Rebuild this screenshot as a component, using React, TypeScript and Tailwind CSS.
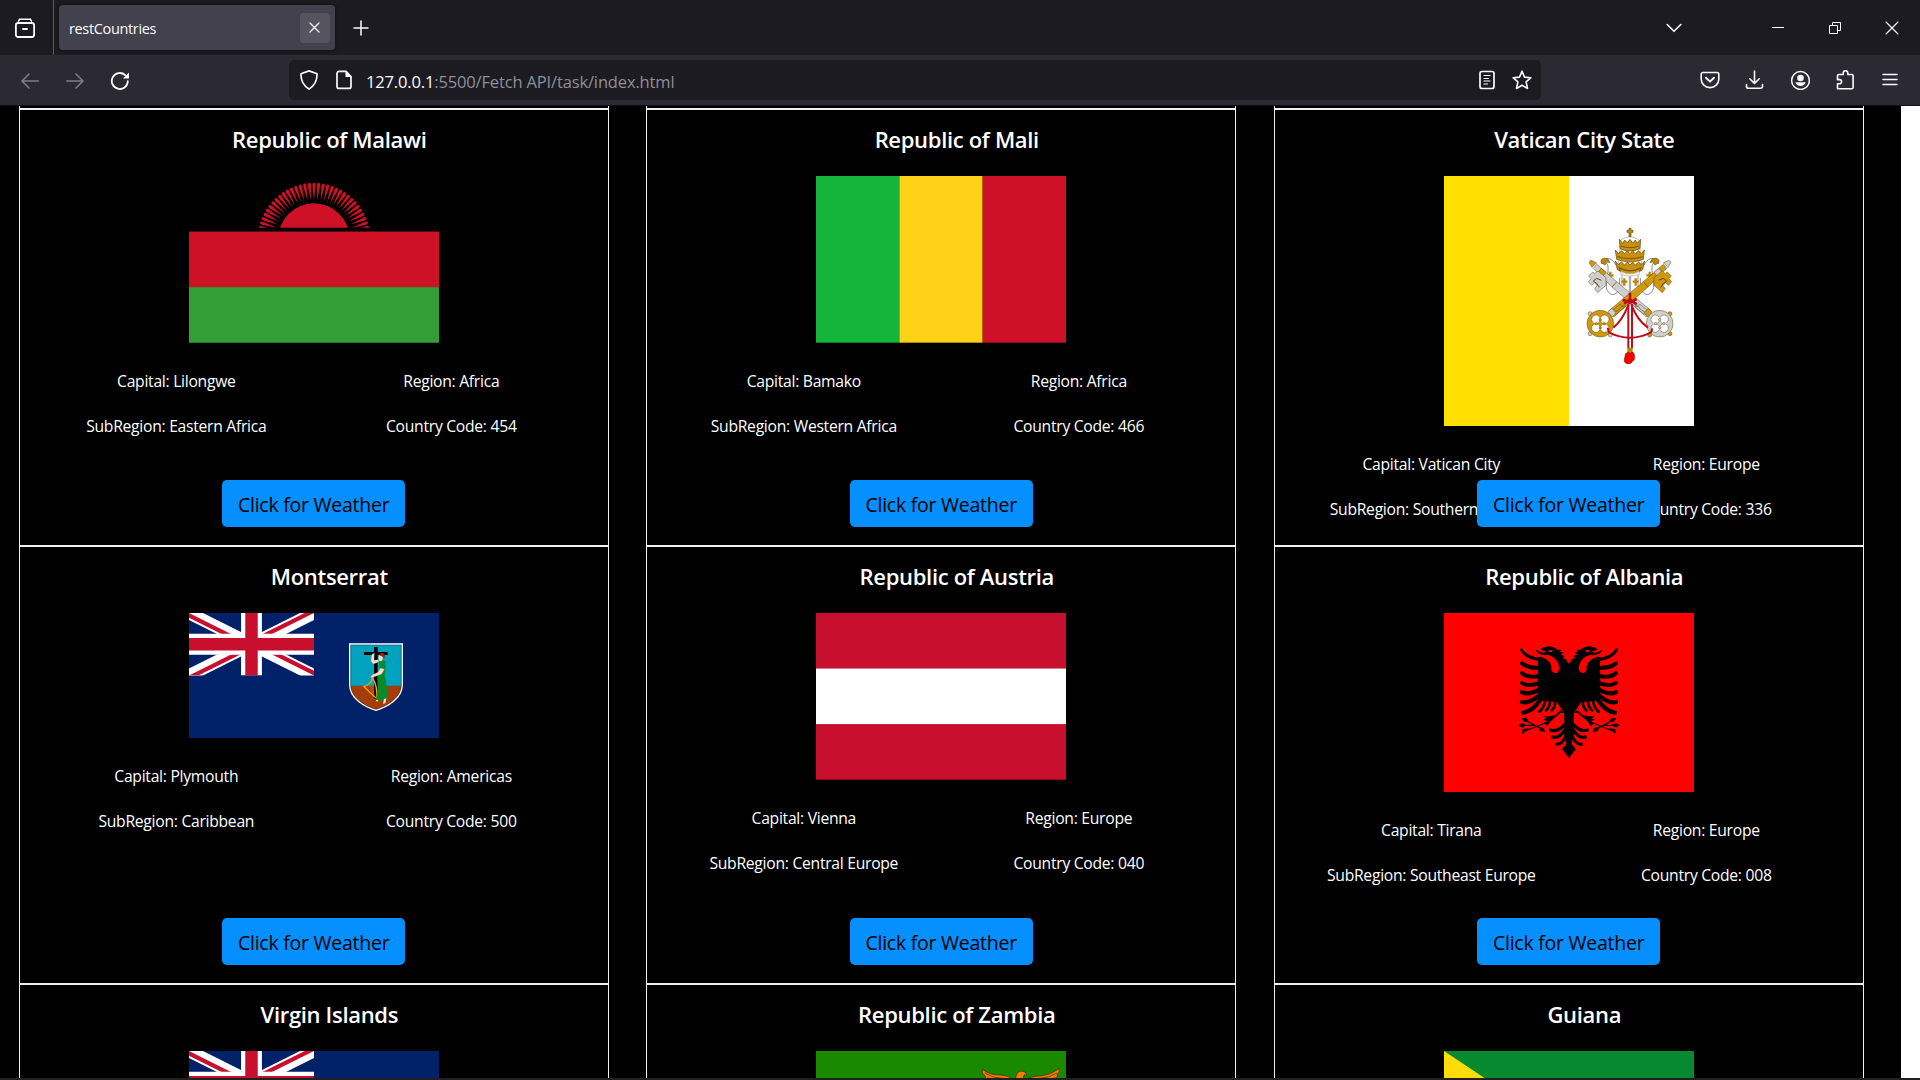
import React from "react";

const Icon = ({ w = 20, h = 20, className = "", children }: { w?: number; h?: number; className?: string; children: React.ReactNode }) => (
  <svg
    width={w}
    height={h}
    viewBox={`0 0 ${w} ${h}`}
    fill="none"
    stroke="#fbfbfe"
    strokeWidth={1.6}
    strokeLinecap="round"
    strokeLinejoin="round"
    className={`block shrink-0 ${className}`}
  >
    {children}
  </svg>
);

function TabBar() {
  return (
    <div className="flex h-[55px] items-center bg-[#1c1b22]">
      <div className="flex h-full w-[54px] items-center border-r border-[#5a5960] pl-[15px]">
        <Icon>
          <path d="M4.5 1.2h11M3.5 3.2l1-1.8M16.500 3.200l-1-1.800" strokeWidth={1.5} />
          <rect x="0.900" y="5" width="18.200" height="14" rx="2.200" strokeWidth={1.8} />
          <path d="M8 11h4" strokeWidth={1.800} />
        </Icon>
      </div>
      <div className="ml-[5px] flex h-[45px] w-[276px] items-center justify-between rounded-[4px] bg-[#42414d] pr-[5px] pl-[10px] shadow-[0_0_4px_rgba(0,0,0,0.5)]">
        <span className="pt-[2px] text-[14.500px] tracking-[-0.350px] text-[#fbfbfe]">restCountries</span>
        <span className="flex h-[30px] w-[30px] items-center justify-center rounded-[4px] bg-[#55545f]">
          <Icon w={11} h={11} className="mr-[1px]">
            <path d="M1 1l9 9M10 1l-9 9" strokeWidth={1.300} />
          </Icon>
        </span>
      </div>
      <Icon w={16} h={16} className="ml-[18px]">
        <path d="M8 1v14M1 8h14" strokeWidth={1.500} />
      </Icon>
      <div className="ml-auto flex items-center pr-[21.500px]">
        <Icon w={16} h={10} className="mr-[90px]">
          <path d="M1.200 1.500l6.800 6.800 6.800-6.800" />
        </Icon>
        <Icon w={12} h={12} className="mr-[45px]">
          <path d="M0 5.500h12" strokeWidth={1} strokeLinecap="butt" />
        </Icon>
        <Icon w={12} h={12} className="mr-[44px]">
          <path d="M.5 3.500h8v8h-8zM3.500 3.500v-3h8v8h-3" strokeWidth={1} strokeLinejoin="miter" strokeLinecap="butt" />
        </Icon>
        <Icon w={14} h={14}>
          <path d="M1 1l12 12M13 1L1 13" strokeWidth={1.100} />
        </Icon>
      </div>
    </div>
  );
}

function ToolBar() {
  return (
    <div className="flex h-[51px] items-center border-b border-[#0f0e14] bg-[#2b2a33]">
      <Icon w={18} h={16} className="mt-[1px] ml-[21px] opacity-40">
        <path d="M17.300 8H1M8 1L1 8l7 7" strokeWidth={1.500} />
      </Icon>
      <Icon w={18} h={16} className="mt-[1px] ml-[27px] opacity-40">
        <path d="M.7 8H17M10 1l7 7-7 7" strokeWidth={1.500} />
      </Icon>
      <Icon className="mt-[1px] ml-[26px]">
        <path d="M17.800 10.200a8 8 0 1 1-2.600-6.100" strokeWidth={1.800} />
        <path d="M19 1.500V7.500h-6z" fill="#fbfbfe" stroke="none" />
      </Icon>
      <div className="ml-[159px] flex h-10 w-[1252px] items-center rounded-[5px] bg-[#1c1b22]">
        <Icon className="ml-[10px]">
          <path d="M10 .9L18 3.800c.3 6.500-2 11.600-8 15.300C4 15.400 1.700 10.300 2 3.800z" strokeWidth={1.700} />
        </Icon>
        <Icon w={16} className="ml-[17px]">
          <path d="M10 1.400H3A2 2 0 0 0 1 3.400v13a2 2 0 0 0 2 2h10a2 2 0 0 0 2-2V6.500z" strokeWidth={1.700} />
          <path d="M9.500 1v6h6z" fill="#fbfbfe" stroke="none" />
        </Icon>
        <span className="ml-[14px] pt-[4px] text-[16.500px] tracking-[-0.150px] text-[#8f8f98]">
          <span className="text-[#fbfbfe]">127.0.0.1</span>:5500/Fetch API/task/index.html
        </span>
        <Icon w={16} className="ml-auto">
          <rect x="1" y="1.500" width="14" height="17" rx="2" strokeWidth={1.700} />
          <path d="M5 5.500h6M5 8.500h4.500M5 11h6M5 14h3.500" strokeWidth={1.200} />
        </Icon>
        <Icon className="mr-[9px] ml-[17px]">
          <path d="M10 1.200l2.500 5.900 6.400.6-4.800 4.200 1.400 6.600L10 15.200l-5.500 3.300 1.400-6.600L1.100 7.700l6.400-.6z" />
        </Icon>
      </div>
      <div className="ml-auto flex items-center pr-[22px]">
        <Icon>
          <path d="M3 2.500h14a1.800 1.800 0 0 1 1.800 1.800v5a8.800 8.300 0 0 1-17.600 0v-5A1.800 1.800 0 0 1 3 2.500z" />
          <path d="M6 7.800l4 3.800 4-3.800" strokeWidth={2} />
        </Icon>
        <Icon className="ml-[24px]">
          <path d="M10.500 1v12.300M5.800 8.800l4.700 4.700 4.700-4.700M2.500 14.500v2a1.800 1.800 0 0 0 1.800 1.800h12.400a1.800 1.800 0 0 0 1.800-1.800v-2" />
        </Icon>
        <Icon className="ml-[26px]">
          <circle cx="10.500" cy="10.500" r="8.900" strokeWidth={1.500} />
          <circle cx="10.500" cy="8" r="3.300" fill="#fbfbfe" stroke="none" />
          <path d="M5.300 12.300h10.400c-.6 2.400-2.600 3.700-5.200 3.700s-4.600-1.300-5.200-3.700z" fill="#fbfbfe" stroke="none" />
        </Icon>
        <Icon className="ml-[25px]">
          <path d="M2.500 18.800V13.800h2a2.100 2.100 0 0 0 0-4.200h-2V5.800a1.300 1.300 0 0 1 1.300-1.300h4.400V3a2.300 2.300 0 0 1 4.600 0v1.500h4a1.300 1.300 0 0 1 1.300 1.300v11.700a1.300 1.300 0 0 1-1.300 1.300z" />
        </Icon>
        <Icon w={16} className="ml-[27px]">
          <path d="M1 4.500h14M1 9.500h14M1 14.500h14" strokeWidth={1.500} />
        </Icon>
      </div>
    </div>
  );
}

const Svg = ({ h, children }: { h: number; children: React.ReactNode }) => (
  <svg width={250} height={h / 3} viewBox={`0 0 750 ${h}`} preserveAspectRatio="none" className="block shrink-0">
    {children}
  </svg>
);

const rays = Array.from({ length: 33 }, (_, i) => (i - 16) * 4.87);

const Malawi = () => (
  <Svg h={500}>
    <defs>
      <clipPath id="sunClip">
        <rect x="0" y="0" width="750" height="155" />
      </clipPath>
    </defs>
    <rect width="750" height="500" fill="#000" />
    <rect y="166.700" width="750" height="167" fill="#ce1126" />
    <rect y="333.300" width="750" height="167" fill="#339e35" />
    <g clipPath="url(#sunClip)" fill="#ce1126">
      <circle cx="375" cy="189" r="107" />
      {rays.map((a) => (
        <path key={a} transform={`rotate(${a} 375 189)`} d="M375 72 L370 27 Q370 20 375 20 Q380 20 380 27 Z" />
      ))}
    </g>
  </Svg>
);

const Mali = () => (
  <Svg h={500}>
    <rect width="250" height="500" fill="#14b53a" />
    <rect x="250" width="250" height="500" fill="#fcd116" />
    <rect x="500" width="250" height="500" fill="#ce1126" />
  </Svg>
);

/* One key, drawn with its bow at lower left and its bit at upper right. */
const Key = ({ main, accent }: { main: string; accent: string }) => (
  <g stroke="#5c4a1a" strokeWidth={1.500}>
    <path d="M537 437L640 350l14 16L551 456z" fill={main} />
    <path d="M640 350l60-52 10 12-56 56z" fill={main} />
    <path d="M672 322l14-12 12 14-14 12z" fill={accent} />
    <path d="M708 300l-8-6 12-6a6 6 0 1 1 8 9l-6 10z" fill={accent} />
    <path d="M672 338l24-20 10 8 6-5 12 12-7 8 8 9-10 11-9-8-7 9 7 9-9 12-25-22z" fill={main} />
    <path d="M686 346l14-6 10 8-10 7-8 12" fill="none" strokeWidth={3} />
    <path d="M548 436l22-18 14 8-26 22z" fill={main} />
    <path d="M556 440q10-2 14-10t16-8" fill="none" strokeWidth={2} />
    <circle cx="480" cy="446" r="6" fill={accent} />
    <circle cx="480" cy="506" r="6" fill={accent} />
    <circle cx="541" cy="510" r="6" fill={accent} />
    <path d="M534 440l12-10 12 14-12 12z" fill={accent} />
    <circle cx="511" cy="476" r="40" fill={main} />
    <g fill="#fff">
      <circle cx="498" cy="463" r="13" />
      <circle cx="524" cy="463" r="13" />
      <circle cx="498" cy="489" r="13" />
      <circle cx="524" cy="489" r="13" />
    </g>
    <path d="M511 446v60M481 476h60" stroke={main} strokeWidth={4} />
    <g fill={main}>
      <circle cx="511" cy="464" r="3.500" />
      <circle cx="511" cy="488" r="3.500" />
      <circle cx="499" cy="476" r="3.500" />
      <circle cx="523" cy="476" r="3.500" />
    </g>
  </g>
);

const Lappet = () => (
  <g>
    <path
      d="M558 300q-14-24-30-19-16 5-14 14 18-8 20 10c3 22-8 40-5 62 2 14 14 26 26 20 12-5 14-22 14-48"
      fill="#fff"
      stroke="#8a8a8a"
      strokeWidth={3}
    />
    <path d="M576 322v60q8 8 22 4v-58z" fill="#fff" stroke="#8a8a8a" strokeWidth={2.500} />
    <path d="M513 293q-2-12 10-14l12 4 5 10-9-2-6 9z" fill="#b8860b" stroke="#5c4a1a" strokeWidth={1.500} />
    <path d="M541 320v24M531 331h20M583 340v22M574 350h18M552 348v18" stroke="#b8860b" strokeWidth={7} />
  </g>
);

const Vatican = () => (
  <Svg h={750}>
    <rect width="375" height="750" fill="#ffe000" />
    <rect x="375" width="375" height="750" fill="#fff" />
    <g transform="translate(-42 -33)">
      <Lappet />
      <g transform="matrix(-1 0 0 1 1200 0)">
        <Lappet />
      </g>
      <g transform="matrix(-1 0 0 1 1200 0)">
        <Key main="#cfcfcf" accent="#d0980c" />
      </g>
      <Key main="#d0980c" accent="#cfcfcf" />
      <path d="M573 225q27-20 54 0l9 85q-36 34-72 0z" fill="#fff" stroke="#999" strokeWidth={2} />
      <g fill="#c8900c" stroke="#5c4208" strokeWidth={2}>
        <path d="M597 190h6v6h6v6h-6v13h-6v-13h-6v-6h6z" />
        <path d="M568 223l10 12 6-10 8 9 8-11 8 11 8-9 6 10 10-12-2 28q-30 14-60 0z" />
        <path d="M556 255l10 11 8-9 10 9 8-9 8 9 8-9 8 9 10-9 8 9 9-11-3 28q-40 16-80 0z" />
        <path d="M556 288l9 11 9-8 10 9 8-9 8 9 8-9 8 9 10-9 9 8 9-11-6 26q-36 24-76 0z" />
        <path d="M568 308q32 20 64 0l-3 13q-29 20-58 0z" />
      </g>
      <path d="M572 243q28 10 56 0M562 275q38 12 76 0M566 309q34 16 68 0" stroke="#7a5706" strokeWidth={3} fill="none" />
      <path d="M572 319q28 15 56 0v9q-28 11-56 0z" fill="#eee" stroke="#aaa" strokeWidth={1.500} />
      <g fill="none" stroke="#b9101c" strokeWidth={6}>
        <path d="M600 384v34M578 404l22 8 20-10M582 416l18-12 20 14" strokeWidth={8} />
        <path d="M596 418q-20 50-46 70M604 418q16 46 50 70" />
        <path d="M533 488l4 14q63 32 126 0l4-12" strokeWidth={6} />
        <path d="M595 416v134M606 416v134" />
      </g>
      <path d="M592 548h16v18h-16z" fill="#b8860b" />
      <path d="M587 566q8-7 14 0l3-4q8-2 9 8 2 18-6 19-2 8-13 7-12-1-11-12z" fill="#f00" stroke="#900" strokeWidth={2} />
    </g>
  </Svg>
);

const UnionJack = ({ id }: { id: string }) => (
  <g transform="scale(6.25)">
    <defs>
      <clipPath id={`${id}a`}>
        <path d="M0 0h60v30H0z" />
      </clipPath>
      <clipPath id={`${id}b`}>
        <path d="M30 15h30v15zv15H0zH0V0zV0h30z" />
      </clipPath>
    </defs>
    <g clipPath={`url(#${id}a)`}>
      <path d="M0 0l60 30M60 0L0 30" stroke="#fff" strokeWidth={6} />
      <path d="M0 0l60 30M60 0L0 30" clipPath={`url(#${id}b)`} stroke="#c8102e" strokeWidth={4} />
      <path d="M30 0v30M0 15h60" stroke="#fff" strokeWidth={10} />
      <path d="M30 0v30M0 15h60" stroke="#c8102e" strokeWidth={6} />
    </g>
  </g>
);

const Montserrat = () => (
  <Svg h={375}>
    <rect width="750" height="375" fill="#012169" />
    <UnionJack id="ms" />
    <g transform="translate(-27 -39)">
      <path d="M510 132h156v122c0 42-44 66-78 76-34-10-78-34-78-76z" fill="#00a2bd" />
      <path d="M510 257h156c-2 42-46 63-78 73-32-10-76-31-78-73z" fill="#a53d08" />
      <path d="M552 156h71v9h-30v132h-11V165h-30zM582 141h11v20h-11z" fill="#000" />
      <path d="M577 234q16 22 13 62l-38-36q22-8 25-26z" fill="none" stroke="#f0a010" strokeWidth={4} />
      <path d="M565 245l14 36M572 242l12 46" stroke="#f0a010" strokeWidth={1} />
      <path d="M596 184L608 180 616 184 617 206 614 224 621 262 623 292 608 304 588 300 594 262 592 228 600 206Z" fill="#078a2c" />
      <path d="M596 186l-16 6-7-8 2-20 8-5-1 22 14-2zM602 204l-8 13-18 8-5 8 8-1 26-10 8-14z" fill="#ffe0c8" stroke="#a88" strokeWidth={1} />
      <ellipse cx="602" cy="173" rx="6" ry="10" fill="#ffe0c8" />
      <path d="M598 166q2-8 10-7 10 3 5 16l-5-5z" fill="#a8200d" />
      <path d="M612 297l7-2-3 15-7 1zM587 300h8l-4 6z" fill="#ffe0c8" />
      <path d="M509 132h158v122c0 42-46 67-79 77-33-10-79-35-79-77z" fill="none" stroke="#fff" strokeWidth={4} />
      <path d="M512.500 135.500h151v118c0 40-44 64-75.500 74-31.500-10-75.500-34-75.500-74z" fill="none" stroke="#333" strokeWidth={1.200} />
    </g>
  </Svg>
);

const Austria = () => (
  <Svg h={500}>
    <rect width="750" height="500" fill="#c8102e" />
    <rect y="166.700" width="750" height="166.600" fill="#fff" />
  </Svg>
);

const EagleHalf = () => (
  <g>
    <path
      d="M388 193L382 185 378 177 368 175 373 168 363 164 370 157 360 156 365 149 352 149Q342 140 325 139L308 143 301 149 312 152 320 156 308 158Q298 156 290 149L288 152Q294 162 308 164L318 166 294 172 293 290 310 303 350 306 372 338 373 362 372 400 379 432 366 448 388 475Z"
      fill="#000"
    />
    <path d="M325 151l13-1-3 6-8 1z" fill="#f00" />
    <path d="M300 170Q316 172 330 188 336 197 334 208 336 219 346 219 357 217 358 205 356 180 335 169L322 164Z" fill="#f00" />
    <path d="M300 183q-41-2-59-31-2-8 5-8 12 24 54 30z" fill="#000" />
    <g fill="none" stroke="#000" strokeWidth={12} strokeLinecap="round">
      <path d="M300 203q-34 3-54-13" />
      <path d="M300 228q-38 7-54-9" />
      <path d="M300 248q-36 14-54 1" />
      <path d="M300 267q-32 20-54 10" strokeWidth={13} />
      <path d="M300 284q-30 28-54 22" strokeWidth={13} />
      <path d="M302 298q-26 38-53 40" strokeWidth={13} />
      <path d="M315 303q-4 22-17 32" strokeWidth={8} />
      <path d="M330 304q0 16-12 28" strokeWidth={8} />
      <path d="M345 306q2 14-10 25" strokeWidth={8} />
      <path d="M374 374q-22 24-42 16" strokeWidth={10} />
      <path d="M376 388q-20 30-38 23" strokeWidth={10} />
      <path d="M380 402q-12 32-30 31" strokeWidth={9} />
    </g>
    <path d="M372 338Q350 344 330 366L322 378 312 369 322 365 310 358 320 356 309 349Q325 350 345 346L362 330Z" fill="#000" />
    <ellipse cx="358" cy="358" rx="11" ry="22" transform="rotate(30 358 358)" fill="#f00" />
    <path d="M325 365L248 396M250 358l62 33M236 376h50" stroke="#000" strokeWidth={3.500} />
    <path d="M245 355l14-2 8 12-14 0zM235 376l12-7 10 7-10 7zM246 403l2-16 18-2-10 10zM316 395l-6-12-16-3 8 14z" fill="#000" />
  </g>
);

const Albania = () => (
  <Svg h={537}>
    <rect width="750" height="537" fill="#f00" />
    <g transform="translate(-12 -39)">
      <EagleHalf />
      <g transform="matrix(-1 0 0 1 774 0)">
        <EagleHalf />
      </g>
    </g>
  </Svg>
);

const VirginIslands = () => (
  <Svg h={375}>
    <rect width="750" height="375" fill="#012169" />
    <UnionJack id="vi" />
  </Svg>
);

const Zambia = () => (
  <Svg h={500}>
    <rect width="750" height="500" fill="#198a00" />
    <path
      d="M498 54q22 18 52 18 24 0 40 12l8 8q0-24 12-31 12-3 20 4l2 9-7-3q-5 8-2 20 20-16 48-16 34-3 58-23 4 12-6 20 6 4-6 10 2 6-10 8l-14 10-20 10H550l-24-12-10-10q-10-6-8-12-12-8-10-22z"
      fill="#ef7d00"
      stroke="#3a1c00"
      strokeWidth={2}
    />
    <path d="M506 66q26 16 54 16l30 12M514 80q22 12 40 12l20 6M724 66q-26 16-54 16l-30 12M716 80q-22 12-40 12l-20 6" fill="none" stroke="#6b3600" strokeWidth={2.500} />
  </Svg>
);

const Guiana = () => (
  <Svg h={500}>
    <rect width="750" height="500" fill="#078930" />
    <path d="M0 0l750 500H0z" fill="#fcdd09" />
  </Svg>
);

type Country = { name: string; flag: React.ReactNode; capital?: string; region?: string; sub?: string; code?: string };

const rows: Country[][] = [
  [
    { name: "Republic of Malawi", flag: <Malawi />, capital: "Lilongwe", region: "Africa", sub: "Eastern Africa", code: "454" },
    { name: "Republic of Mali", flag: <Mali />, capital: "Bamako", region: "Africa", sub: "Western Africa", code: "466" },
    { name: "Vatican City State", flag: <Vatican />, capital: "Vatican City", region: "Europe", sub: "Southern Europe", code: "336" },
  ],
  [
    { name: "Montserrat", flag: <Montserrat />, capital: "Plymouth", region: "Americas", sub: "Caribbean", code: "500" },
    { name: "Republic of Austria", flag: <Austria />, capital: "Vienna", region: "Europe", sub: "Central Europe", code: "040" },
    { name: "Republic of Albania", flag: <Albania />, capital: "Tirana", region: "Europe", sub: "Southeast Europe", code: "008" },
  ],
  [
    { name: "Virgin Islands", flag: <VirginIslands /> },
    { name: "Republic of Zambia", flag: <Zambia /> },
    { name: "Guiana", flag: <Guiana /> },
  ],
];

function Card({ c }: { c: Country }) {
  return (
    <div className="relative flex h-full w-[590px] shrink-0 flex-col items-center border border-[#f0f0f0]">
      <h2 className="mt-[14px] h-[30px] pl-[31px] text-[22px] leading-[30px] font-semibold tracking-[-0.320px] whitespace-nowrap text-white">{c.name}</h2>
      <div className="mt-[22px]">{c.flag}</div>
      {c.capital && (
        <>
          <div className="mt-[16.200px] grid w-[550px] grid-cols-2 text-center text-[15.700px] leading-[44.700px] font-[370] tracking-[-0.280px] whitespace-nowrap text-white">
            <span>Capital: {c.capital}</span>
            <span>Region: {c.region}</span>
            <span>SubRegion: {c.sub}</span>
            <span>Country Code: {c.code}</span>
          </div>
          <button className="absolute bottom-[18px] left-[202.400px] h-[47px] w-[183px] rounded-[5px] bg-[#058fff] pt-[2px] text-[19.500px] tracking-[-0.250px] whitespace-nowrap text-black">
            Click for Weather
          </button>
        </>
      )}
    </div>
  );
}

export default function App() {
  return (
    <div className="flex h-[1080px] w-[1920px] flex-col overflow-hidden bg-black font-['Open_Sans','Noto_Sans',sans-serif]">
      <TabBar />
      <ToolBar />
      <div className="flex h-[972px] shrink-0 overflow-hidden">
        <div className="w-[1901px] shrink-0 overflow-hidden bg-black">
          <div className="flex h-[3px] gap-[37.500px] pl-[18.800px]">
            {[0, 1, 2].map((i) => (
              <div key={i} className="w-[590px] shrink-0 border border-t-0 border-[#f0f0f0]" />
            ))}
          </div>
          {rows.map((row, i) => (
            <div key={i} className={`flex gap-[37.500px] pl-[18.800px] ${i === 1 ? "h-[438px]" : "h-[437px]"}`}>
              {row.map((c) => (
                <Card key={c.name} c={c} />
              ))}
            </div>
          ))}
        </div>
        <div className="flex-1 bg-white" />
      </div>
      <div className="h-[2px] shrink-0 bg-[#202020]" />
    </div>
  );
}
